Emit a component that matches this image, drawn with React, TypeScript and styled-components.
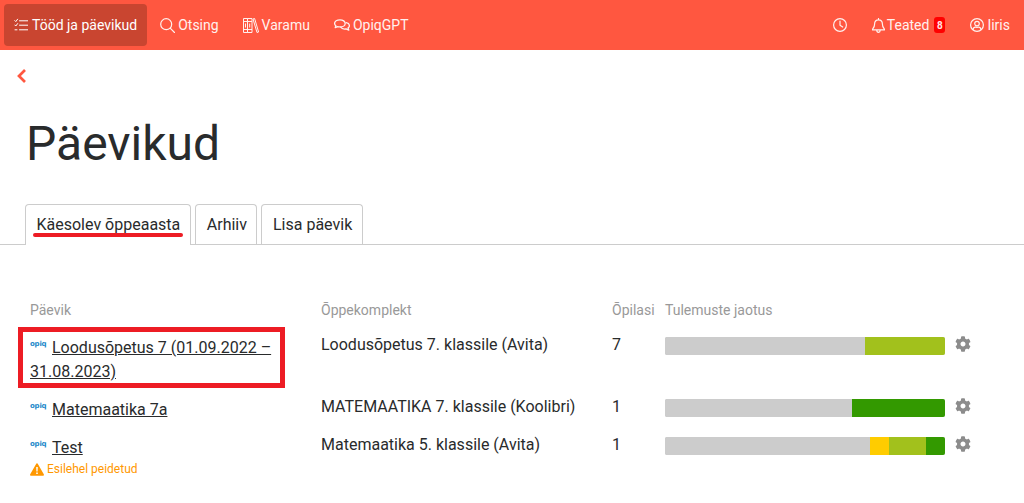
import React from "react";
import styled, { createGlobalStyle } from "styled-components";

const Global = createGlobalStyle`
  html, body { margin: 0; padding: 0; background: #fff; overflow: hidden; }
  body { font-family: Roboto, "Liberation Sans", sans-serif; color: #292b2c; }
`;

const Page = styled.div`
  width: 1024px;
  height: 503px;
  overflow: hidden;
`;

const Nav = styled.nav`
  height: 50px;
  background: #ff5740;
  display: flex;
  align-items: center;
  padding: 0 2px 0 4px;
  color: #fff;
  font-size: 14px;
`;

const NavItem = styled.a<{ $active?: boolean; $gap?: number }>`
  height: 42px;
  display: flex;
  align-items: center;
  gap: ${(p) => p.$gap ?? 4}px;
  padding: ${(p) => (p.$active ? "0 10px" : "0 12px")};
  margin-right: ${(p) => (p.$active ? 1 : 0)}px;
  border-radius: 4px;
  color: ${(p) => (p.$active ? "#fff" : "#fff1ef")};
  background: ${(p) => (p.$active ? "#c94530" : "transparent")};
  svg { flex: none; }
`;

const BellItem = styled(NavItem)`
  padding: 0 13px;
  gap: 2px;
`;

const Spacer = styled.div`
  flex: 1;
`;

const Badge = styled.span`
  margin-left: 3px;
  background: #f00;
  color: #ffe5e5;
  font-size: 10px;
  font-weight: 700;
  width: 11px;
  height: 16px;
  border-radius: 3px;
  display: flex;
  align-items: center;
  justify-content: center;
`;

const Back = styled.div`
  height: 50px;
  padding: 18px 0 0 17px;
  box-sizing: border-box;
  color: #ff5740;
`;

const Title = styled.h1`
  margin: 11px 0 0 26px;
  font-size: 48px;
  font-weight: 400;
  line-height: 65px;
  color: #292b2c;
`;

const Tabs = styled.div`
  margin-top: 28px;
  height: 40px;
  display: flex;
  align-items: flex-start;
  gap: 4px;
  padding-left: 25px;
  border-bottom: 1px solid #ccc;
`;

const Tab = styled.a<{ $active?: boolean }>`
  position: relative;
  height: ${(p) => (p.$active ? 41 : 40)}px;
  box-sizing: border-box;
  padding: ${(p) => (p.$active ? "0 10px 1px 10.5px" : "0 9.5px 0 10.5px")};
  display: flex;
  align-items: center;
  font-size: 16px;
  border: 1px solid #ccc;
  border-bottom: none;
  border-radius: 4px 4px 0 0;
  background: #fff;
  color: #292b2c;
`;

const Underline = styled.span`
  position: absolute;
  left: 7px;
  right: 7px;
  top: 28px;
  height: 4px;
  border-radius: 2px;
  background: #ed1c24;
`;

const Table = styled.div`
  margin-top: 55px;
  padding-left: 30px;
  display: grid;
  grid-template-columns: 291px 291px 53px 1fr;
`;

const Head = styled.div`
  font-size: 14px;
  line-height: 21px;
  color: #999;
  padding-bottom: 11px;
`;

const Cell = styled.div<{ $h: number }>`
  height: ${(p) => p.$h}px;
  font-size: 16px;
  line-height: 24px;
  color: #292b2c;
`;

const TextCell = styled(Cell)`
  box-sizing: border-box;
  padding-top: 1px;
`;

const NameCell = styled(Cell)`
  position: relative;
  padding-top: 3px;
  box-sizing: border-box;
`;

const Highlight = styled.span`
  position: absolute;
  left: -12px;
  top: -5px;
  width: 267px;
  height: 61px;
  box-sizing: border-box;
  border: 5px solid #ed1c24;
`;

const NameLink = styled.a`
  color: #292b2c;
  text-decoration: underline;
  display: block;
  width: 245px;
`;

const Logo = styled.span`
  display: inline-block;
  width: 22px;
  padding-top: 5px;
  font-family: "DejaVu Sans", sans-serif;
  font-size: 7px;
  font-weight: 700;
  line-height: 8px;
  letter-spacing: -0.2px;
  color: #1b87c9;
  vertical-align: 7px;
`;

const Warning = styled.div`
  display: flex;
  align-items: center;
  gap: 3px;
  font-size: 12px;
  line-height: 18px;
  color: #ff9800;
`;

const BarRow = styled.div`
  display: flex;
  align-items: flex-start;
  gap: 10px;
  padding-top: 5px;
  color: #8c8c8c;
  svg { margin-top: -1px; }
`;

const Bar = styled.div`
  width: 280px;
  height: 18px;
  display: flex;
  border-radius: 2px;
  overflow: hidden;
  background: #ccc;
`;

const Seg = styled.div<{ $w: number; $c: string }>`
  flex: none;
  width: ${(p) => p.$w}px;
  background: ${(p) => p.$c};
`;

const Stroke = { fill: "none", stroke: "currentColor", strokeWidth: 1.2, strokeLinecap: "round", strokeLinejoin: "round" } as const;

const Check = () => (
  <svg width="14" height="14" viewBox="0 0 14 14" {...Stroke} strokeWidth={1}>
    <path d="M.8 2.600l1 1L3.600 1.200M.8 7l1 1L3.600 5.600M1 11.800h2M5.500 2.800H14M5.500 7.200H14M5.500 11.800H14" />
  </svg>
);

const SearchIcon = () => (
  <svg width="15" height="15" viewBox="0 0 15 15" {...Stroke}>
    <circle cx="6.200" cy="6.200" r="5.500" />
    <path d="M10.200 10.200l4.300 4.300" />
  </svg>
);

const Books = () => (
  <svg width="16" height="15" viewBox="0 0 16 15" {...Stroke} strokeLinecap="butt" strokeLinejoin="miter" strokeWidth={1}>
    <path d="M.5 .5h4v14h-4zM4.500 .5h4.500v14H4.500zM.5 3.500h8.500M.5 11.500h8.500M2.500 5.500v4M6.700 5.500v4M10 1l1.600-.5 4 13.500-1.600.5z" />
  </svg>
);

const Chats = () => (
  <svg width="16" height="13" viewBox="0 0 16 13" {...Stroke} strokeWidth={1.3}>
    <path d="M6 .8C3 .8.6 2.400.6 4.400c0 .9.5 1.700 1.300 2.300L1.200 8.600l2.500-1c.7.2 1.500.3 2.300.3 3 0 5.200-1.600 5.200-3.500S9 .8 6 .8z" />
    <path d="M12.200 3.700c1.900.4 3.200 1.500 3.200 3 0 .9-.5 1.700-1.300 2.200l.7 2.300-2.700-1.300c-2.200.4-4.500-.3-5.400-1.700" />
  </svg>
);

const ClockIcon = () => (
  <svg width="14" height="14" viewBox="0 0 14 14" {...Stroke}>
    <circle cx="7" cy="7" r="6.400" />
    <path d="M7 3v4.200l2.700 1.800" />
  </svg>
);

const BellIcon = () => (
  <svg width="13" height="15" viewBox="0 0 13 15" {...Stroke}>
    <path d="M6.500 1.800c-2.400 0-3.900 1.800-3.900 4.100 0 3-1.100 4-2 5.200v.8h11.800v-.8c-.9-1.200-2-2.200-2-5.200 0-2.300-1.500-4.100-3.900-4.100zM6.500 .5v1.300M4.800 12.300c0 1.200.8 2 1.700 2s1.700-.8 1.700-2" />
  </svg>
);

const UserIcon = () => (
  <svg width="14" height="14" viewBox="0 0 14 14" {...Stroke}>
    <circle cx="7" cy="7" r="6.400" />
    <circle cx="7" cy="5.600" r="2.300" />
    <path d="M3 11.500c.3-1.700 1.200-2.400 2.400-2.400.6 0 1 .3 1.600.3s1-.3 1.600-.3c1.200 0 2.100.7 2.400 2.400" />
  </svg>
);

const ChevronBack = () => (
  <svg width="9" height="14" viewBox="0 0 9 14" fill="none" stroke="currentColor" strokeWidth="2.700" strokeLinejoin="miter">
    <path d="M8 1L2 7l6 6" />
  </svg>
);

const WarnIcon = () => (
  <svg width="14" height="13" viewBox="0 0 14 13">
    <path d="M7 .3c.4 0 .7.2.9.6l5.900 10.300c.4.700-.1 1.500-.9 1.500H1.100c-.8 0-1.300-.8-.9-1.500L6.100.9C6.300.5 6.600.3 7 .3z" fill="#ff9800" />
    <path d="M6.200 4h1.600l-.2 4.500H6.400zM6.200 9.500h1.600v1.500H6.200z" fill="#fff" />
  </svg>
);

const Gear = () => (
  <svg width="16" height="16" viewBox="0 0 512 512" fill="#8c8c8c">
    <path d="M487 316l-42-25c4-23 4-47 0-70l42-25c5-3 7-9 5-14-11-35-30-67-54-93-4-4-10-5-15-2l-42 25c-18-15-39-27-61-35V28c0-6-4-11-9-12-37-8-74-8-110 0-5 1-9 6-9 12v49c-22 8-43 20-61 35L89 87c-5-3-11-2-15 2-24 26-43 58-54 93-2 5 0 11 5 14l42 25c-4 23-4 47 0 70l-42 25c-5 3-7 9-5 14 11 35 30 67 54 93 4 4 10 5 15 2l42-25c18 15 39 27 61 35v49c0 6 4 11 9 12 37 8 74 8 110 0 5-1 9-6 9-12v-49c22-8 43-20 61-35l42 25c5 3 11 2 15-2 24-26 43-58 54-93 2-5 0-11-5-14zM256 336c-44 0-80-36-80-80s36-80 80-80 80 36 80 80-36 80-80 80z" />
  </svg>
);

const rows = [
  { name: "Loodusõpetus 7 (01.09.2022 – 31.08.2023)", book: "Loodusõpetus 7. klassile (Avita)", n: "7", h: 62, hl: true,
    segs: [[200, "#ccc"], [80, "#a2c11c"]] as [number, string][] },
  { name: "Matemaatika 7a", book: "MATEMAATIKA 7. klassile (Koolibri)", n: "1", h: 38,
    segs: [[187, "#ccc"], [93, "#339900"]] as [number, string][] },
  { name: "Test", book: "Matemaatika 5. klassile (Avita)", n: "1", h: 50, warn: true,
    segs: [[205, "#ccc"], [19, "#ffcc00"], [37, "#a2c11c"], [19, "#339900"]] as [number, string][] },
];

export default function App() {
  return (
    <Page>
      <Global />
      <Nav>
        <NavItem $active><Check /> Tööd ja päevikud</NavItem>
        <NavItem $gap={3}><SearchIcon /> Otsing</NavItem>
        <NavItem $gap={3}><Books /> Varamu</NavItem>
        <NavItem $gap={3}><Chats /> OpiqGPT</NavItem>
        <Spacer />
        <NavItem><ClockIcon /></NavItem>
        <BellItem><BellIcon /> Teated <Badge>8</Badge></BellItem>
        <NavItem $gap={3}><UserIcon /> Iiris</NavItem>
      </Nav>
      <Back><ChevronBack /></Back>
      <Title>Päevikud</Title>
      <Tabs>
        <Tab $active>Käesolev õppeaasta<Underline /></Tab>
        <Tab>Arhiiv</Tab>
        <Tab>Lisa päevik</Tab>
      </Tabs>
      <Table>
        <Head>Päevik</Head>
        <Head>Õppekomplekt</Head>
        <Head>Õpilasi</Head>
        <Head>Tulemuste jaotus</Head>
        {rows.map((r) => (
          <React.Fragment key={r.name}>
            <NameCell $h={r.h}>
              {r.hl && <Highlight />}
              <NameLink><Logo>opiq</Logo>{r.name}</NameLink>
              {r.warn && (
                <Warning>
                  <WarnIcon />
                  Esilehel peidetud
                </Warning>
              )}
            </NameCell>
            <TextCell $h={r.h}>{r.book}</TextCell>
            <TextCell $h={r.h}>{r.n}</TextCell>
            <Cell $h={r.h}>
              <BarRow>
                <Bar>{r.segs.map(([w, c], i) => <Seg key={i} $w={w} $c={c} />)}</Bar>
                <Gear />
              </BarRow>
            </Cell>
          </React.Fragment>
        ))}
      </Table>
    </Page>
  );
}
